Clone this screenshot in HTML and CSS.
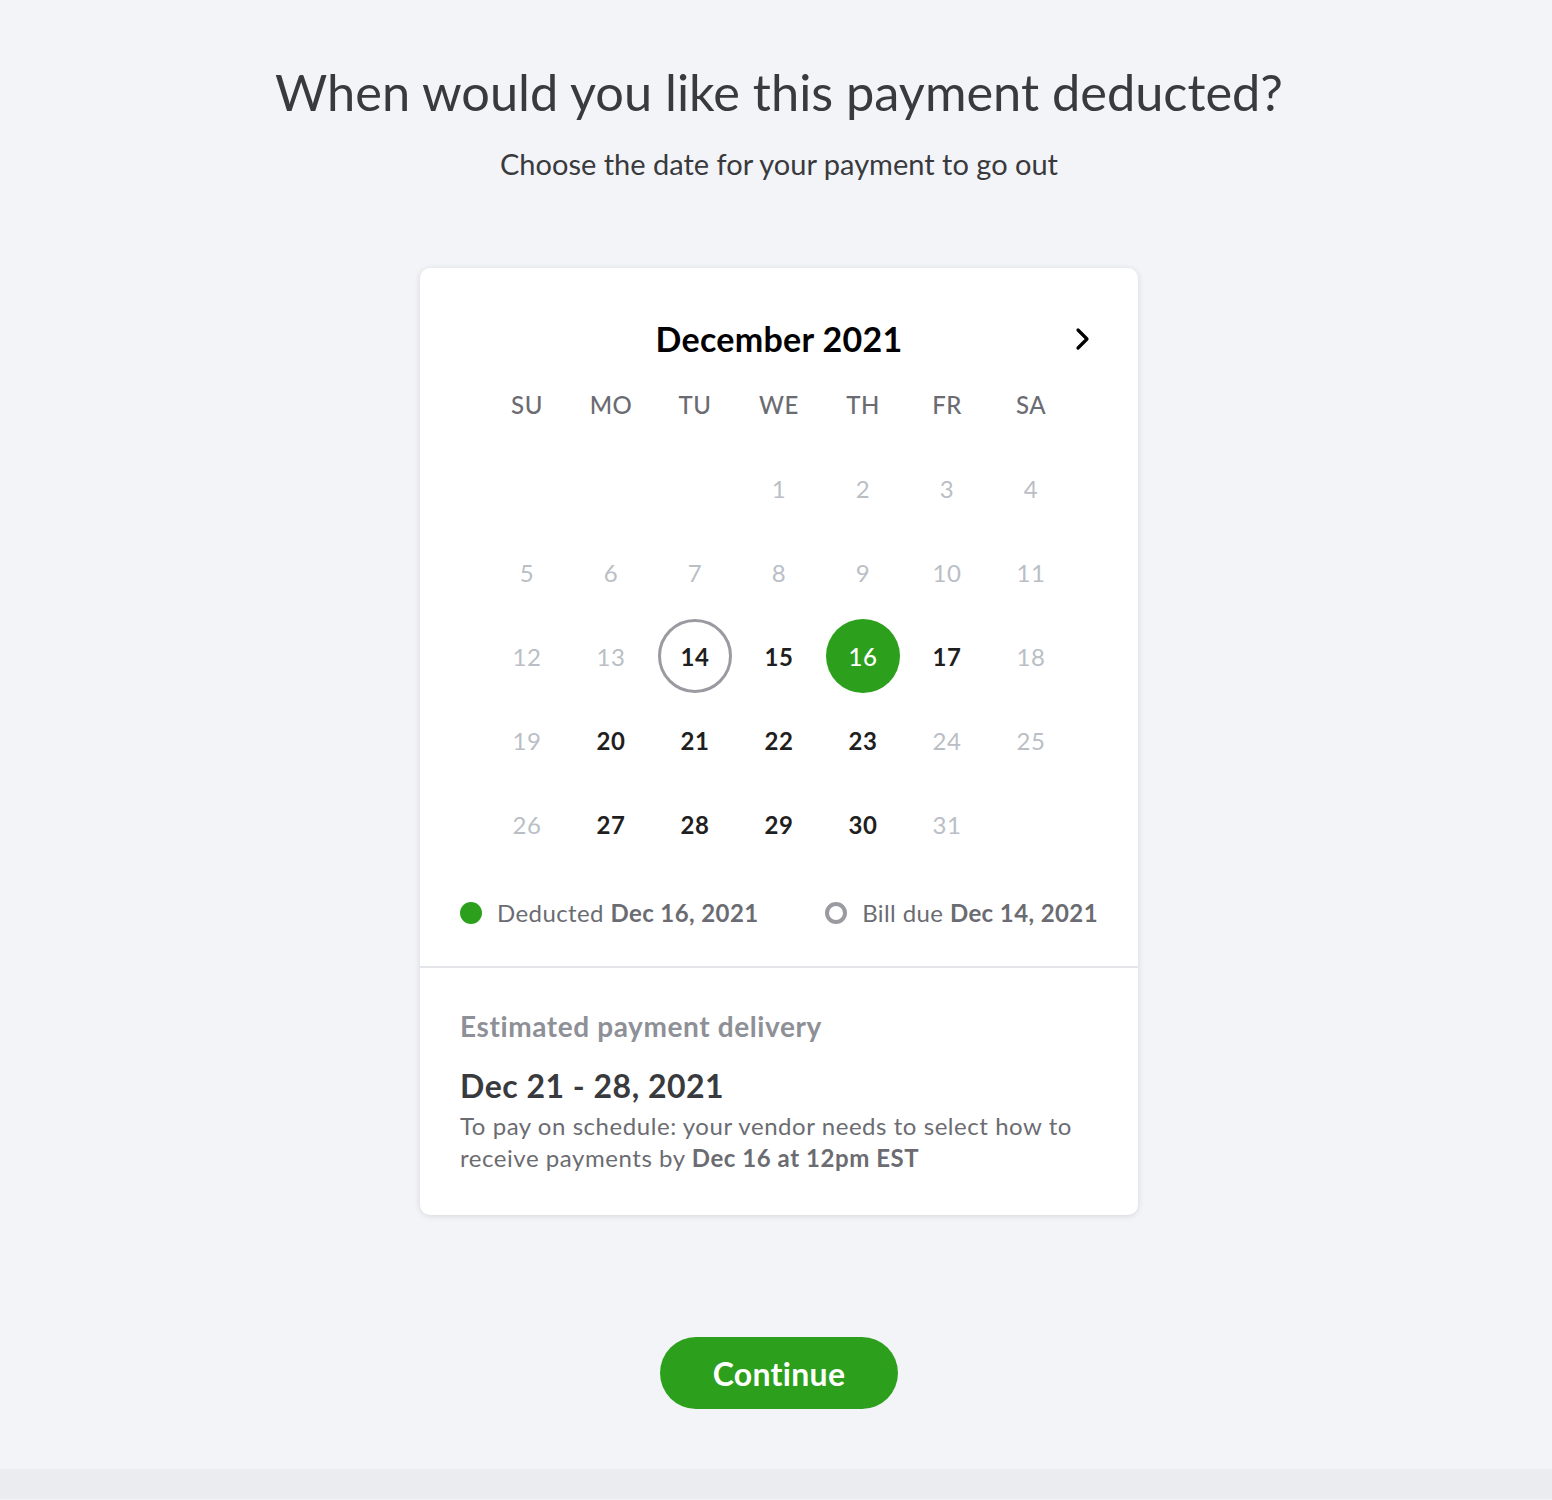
FILE: index.html
```html
<!DOCTYPE html>
<html lang="en">
<head>
  <meta charset="UTF-8" />
  <title>Schedule payment</title>
  <link rel="stylesheet" href="styles.css">
</head>
<body>

<main class="page">
  <h1 class="title">When would you like this payment deducted?</h1>
  <p class="subtitle">Choose the date for your payment to go out</p>

  <section class="card">
    <div class="calendar">
      <div class="month-header">
        <span class="month-name">December 2021</span>
        <button class="next-month" aria-label="Next month">
          <svg width="20" height="24" viewBox="0 0 20 24">
            <path d="M5 3 L14 12 L5 21" fill="none" stroke="#000" stroke-width="3.2" stroke-linecap="round" stroke-linejoin="round"/>
          </svg>
        </button>
      </div>

      <div class="grid">
        <div class="weekday">SU</div>
        <div class="weekday">MO</div>
        <div class="weekday">TU</div>
        <div class="weekday">WE</div>
        <div class="weekday">TH</div>
        <div class="weekday">FR</div>
        <div class="weekday">SA</div>

        <!-- Woche 1 -->
        <div class="day empty"></div>
        <div class="day empty"></div>
        <div class="day empty"></div>
        <div class="day off">1</div>
        <div class="day off">2</div>
        <div class="day off">3</div>
        <div class="day off">4</div>

        <!-- Woche 2 -->
        <div class="day off">5</div>
        <div class="day off">6</div>
        <div class="day off">7</div>
        <div class="day off">8</div>
        <div class="day off">9</div>
        <div class="day off">10</div>
        <div class="day off">11</div>

        <!-- Woche 3 -->
        <div class="day off">12</div>
        <div class="day off">13</div>
        <div class="day"><span class="due">14</span></div>
        <div class="day">15</div>
        <div class="day"><span class="selected">16</span></div>
        <div class="day">17</div>
        <div class="day off">18</div>

        <!-- Woche 4 -->
        <div class="day off">19</div>
        <div class="day">20</div>
        <div class="day">21</div>
        <div class="day">22</div>
        <div class="day">23</div>
        <div class="day off">24</div>
        <div class="day off">25</div>

        <!-- Woche 5 -->
        <div class="day off">26</div>
        <div class="day">27</div>
        <div class="day">28</div>
        <div class="day">29</div>
        <div class="day">30</div>
        <div class="day off">31</div>
        <div class="day empty"></div>
      </div>

      <div class="legend">
        <div class="legend-item">
          <span class="dot dot-filled"></span>
          <span>Deducted <strong>Dec 16, 2021</strong></span>
        </div>
        <div class="legend-item">
          <span class="dot dot-ring"></span>
          <span>Bill due <strong>Dec 14, 2021</strong></span>
        </div>
      </div>
    </div>

    <div class="delivery">
      <div class="delivery-label">Estimated payment delivery</div>
      <div class="delivery-range">Dec 21 - 28, 2021</div>
      <p class="delivery-note">
        To pay on schedule: your vendor needs to select how to<br>
        receive payments by <strong>Dec 16 at 12pm EST</strong>
      </p>
    </div>
  </section>

  <button class="continue">Continue</button>
</main>

<footer class="footer"></footer>

</body>
</html>
```

FILE: styles.css
```css
body {
  font-family: Lato, "Noto Sans", Arial, sans-serif;
  margin: 0;
  padding: 0;
  background-color: #f3f4f8;
  color: #393a3d;
}
.page {
  display: flex;
  flex-direction: column;
  align-items: center;
  padding: 60px 0 0 6px;
}
.title {
  margin: 0;
  font-size: 50.5px;
  font-weight: 400;
  line-height: 64px;
  color: #393a3d;
}
.subtitle {
  margin: 20px 0 0;
  font-size: 29px;
  line-height: 40px;
  color: #393a3d;
}

/* --- Karte mit Kalender --- */
.card {
  width: 718px;
  margin-top: 84px;
  background: #fff;
  border-radius: 10px;
  box-shadow: 0 1px 6px rgba(0,0,0,0.12);
}
.calendar {
  padding: 46px 40px 37px;
  border-bottom: 2px solid #e4e5e9;
}
.month-header {
  position: relative;
  height: 48px;
  display: flex;
  justify-content: center;
  align-items: center;
}
.month-name {
  font-size: 34px;
  font-weight: 700;
  letter-spacing: 0.3px;
  color: #000;
}
.next-month {
  position: absolute;
  right: 5px;
  top: 13px;
  padding: 0;
  border: none;
  background: none;
  cursor: pointer;
}
.grid {
  width: 588px;
  margin: 0 auto;
  display: grid;
  grid-template-columns: repeat(7, 84px);
  grid-auto-rows: 84px;
}
.weekday,
.day {
  display: flex;
  justify-content: center;
  align-items: center;
  font-size: 24px;
  letter-spacing: 0.5px;
}
.weekday {
  color: #6b6c72;
  font-weight: 500;
}
.day {
  color: #1f1f21;
  font-weight: 700;
}
.day.off {
  color: #babec5;
  font-weight: 400;
}
.due,
.selected {
  width: 74px;
  height: 74px;
  box-sizing: border-box;
  border-radius: 50%;
  display: flex;
  justify-content: center;
  align-items: center;
}
.due {
  border: 3px solid #9a9ba0;
}
.selected {
  background: #2ca01c;
  color: #fff;
  font-weight: 500;
}

/* --- Legende --- */
.legend {
  margin-top: 31px;
  display: flex;
  justify-content: space-between;
  font-size: 24px;
  line-height: 32px;
  letter-spacing: 0.4px;
  color: #6b6c72;
}
.legend-item {
  display: flex;
  align-items: center;
  gap: 15px;
}
.legend strong {
  font-weight: 700;
}
.dot {
  width: 22px;
  height: 22px;
  border-radius: 50%;
  box-sizing: border-box;
}
.dot-filled {
  background: #2ca01c;
}
.dot-ring {
  border: 4px solid #9a9ba0;
}

/* --- Voraussichtliche Zustellung --- */
.delivery {
  padding: 40px 40px 41px;
}
.delivery-label {
  font-size: 28px;
  line-height: 36px;
  font-weight: 700;
  letter-spacing: 0.6px;
  color: #8d9096;
}
.delivery-range {
  margin-top: 22px;
  font-size: 32px;
  line-height: 40px;
  font-weight: 700;
  letter-spacing: 0.5px;
  color: #393a3d;
}
.delivery-note {
  margin: 4px 0 0;
  font-size: 24px;
  line-height: 32px;
  letter-spacing: 0.55px;
  color: #6b6c72;
}
.delivery-note strong {
  font-weight: 700;
}

.continue {
  margin-top: 122px;
  width: 238px;
  height: 72px;
  border: none;
  border-radius: 36px;
  background-color: #2ca01c;
  color: #fff;
  font-family: inherit;
  font-size: 32px;
  font-weight: 700;
  letter-spacing: 0.3px;
  cursor: pointer;
}

.footer {
  height: 30px;
  margin-top: 60px;
  background: #ebecf0;
}
```
